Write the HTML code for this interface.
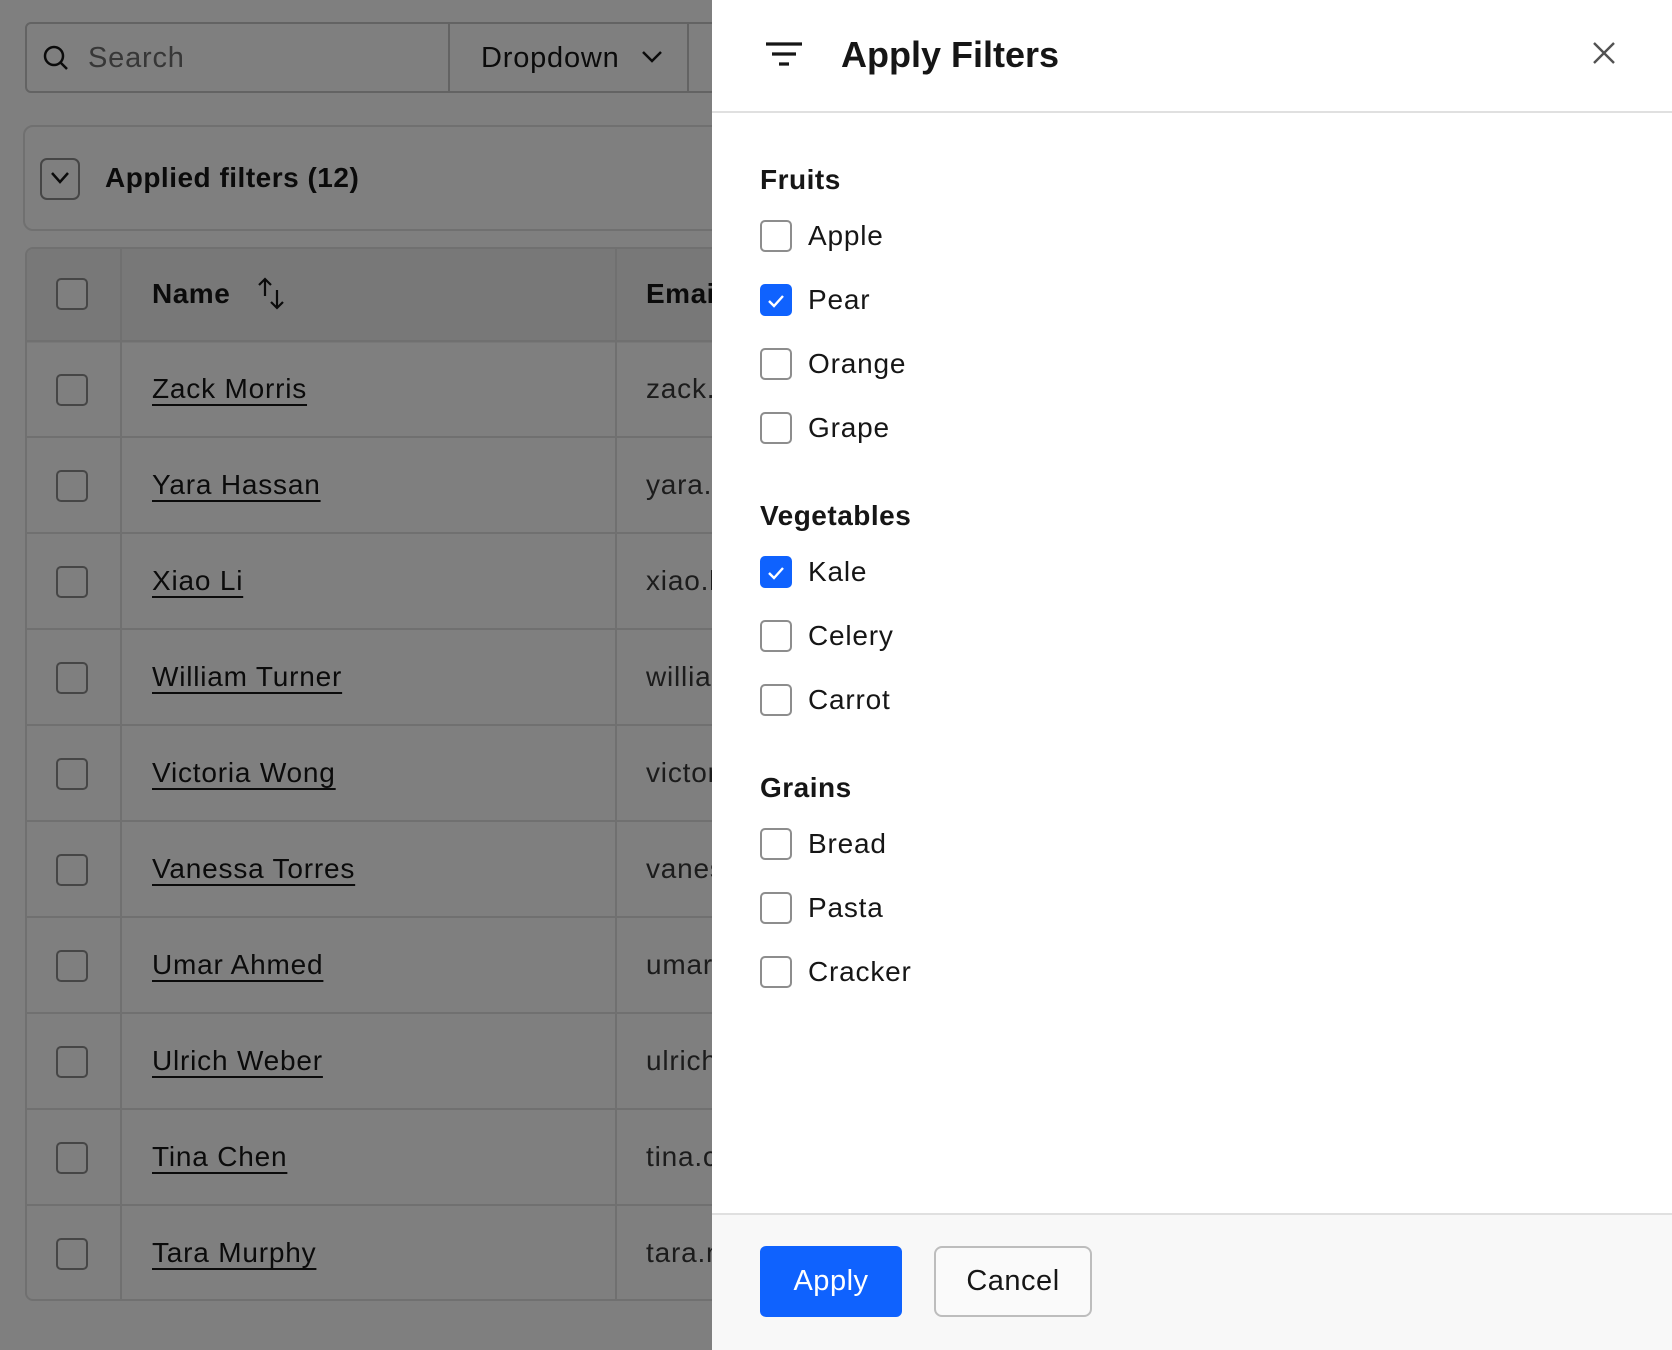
<!DOCTYPE html>
<html><head><meta charset="utf-8"><style>
*{box-sizing:border-box;margin:0;padding:0}
body{width:1672px;height:1350px;position:relative;overflow:hidden;background:#fff;font-family:"Liberation Sans",Arial,sans-serif;color:#161616;letter-spacing:0.5px}
.a{position:absolute}
.box{border:2px solid #c6c6c6;border-radius:6px}
.cb{position:absolute;width:32px;height:32px;border:2px solid #8d8d8d;border-radius:5px;background:#fff}
.ov{position:absolute;left:0;top:0;width:712px;height:1350px;background:rgba(0,0,0,.5)}
.nm{position:absolute;left:152px;font-size:28px;text-decoration:underline;text-decoration-thickness:2px;text-underline-offset:6px;color:#161616;letter-spacing:0.8px}
.em{position:absolute;left:646px;font-size:28px;color:#393939;letter-spacing:0.8px}
.lbl{position:absolute;left:808px;font-size:28px;color:#161616;letter-spacing:0.8px}
.hd{position:absolute;left:760px;font-size:28px;font-weight:bold}
.ck{position:absolute;left:760px;width:32px;height:32px;border:2px solid #8d8d8d;border-radius:5px;background:#fff}
.ck.on{background:#0f62fe;border-color:#0f62fe}
</style></head><body>
<div class="a" style="left:0;top:0;width:712px;height:1350px;background:#fff"></div>
<div class="a box" style="left:25px;top:22px;width:700px;height:71px"></div>
<div class="a" style="left:448px;top:22px;width:2px;height:71px;background:#c6c6c6"></div>
<div class="a" style="left:687px;top:22px;width:2px;height:71px;background:#c6c6c6"></div>
<svg class="a" style="left:42px;top:44px" width="28" height="28" viewBox="0 0 28 28"><circle cx="12" cy="12" r="9" fill="none" stroke="#161616" stroke-width="2.5"/><path d="M18.5 18.5 L25 25" stroke="#161616" stroke-width="2.5"/></svg>
<div class="a" style="left:88px;top:42px;font-size:29px;color:#6f6f6f;letter-spacing:0.8px">Search</div>
<div class="a" style="left:481px;top:42px;font-size:29px;color:#161616;letter-spacing:0.8px">Dropdown</div>
<svg class="a" style="left:640px;top:48px" width="24" height="18" viewBox="0 0 24 18"><path d="M3 4 L12 13 L21 4" fill="none" stroke="#161616" stroke-width="2.5"/></svg>
<div class="a" style="left:23px;top:125px;width:720px;height:106px;border:2px solid #e0e0e0;border-radius:10px;background:#fff"></div>
<div class="a" style="left:40px;top:158px;width:40px;height:42px;border:2px solid #8d8d8d;border-radius:7px"></div>
<svg class="a" style="left:48px;top:168px" width="24" height="20" viewBox="0 0 24 20"><path d="M4 5 L12 14 L20 5" fill="none" stroke="#161616" stroke-width="2.5"/></svg>
<div class="a" style="left:105px;top:162px;font-size:28px;font-weight:bold">Applied filters (12)</div>
<div class="a" style="left:25px;top:247px;width:720px;height:1054px;border:2px solid #e0e0e0;border-radius:8px;background:#fff;overflow:hidden">
<div class="a" style="left:0;top:0;width:720px;height:94px;background:#f0f0f0"></div>
</div>
<div class="a" style="left:120px;top:247px;width:2px;height:1054px;background:#e0e0e0"></div>
<div class="a" style="left:615px;top:247px;width:2px;height:1054px;background:#e0e0e0"></div>
<div class="cb" style="left:56px;top:278px"></div>
<div class="a" style="left:152px;top:278px;font-size:28px;font-weight:bold">Name</div>
<svg class="a" style="left:256px;top:276px" width="32" height="36" viewBox="0 0 32 36"><path d="M9 20 V3 M3 9 L9 3 L15 9 M21 14 V32 M15 26 L21 32 L27 26" fill="none" stroke="#161616" stroke-width="2.2"/></svg>
<div class="a" style="left:646px;top:278px;font-size:28px;font-weight:bold">Email</div>
<div class="a" style="left:25px;top:340px;width:720px;height:2px;background:#e0e0e0"></div>
<div class="a" style="left:25px;top:436px;width:720px;height:2px;background:#e0e0e0"></div>
<div class="a" style="left:25px;top:532px;width:720px;height:2px;background:#e0e0e0"></div>
<div class="a" style="left:25px;top:628px;width:720px;height:2px;background:#e0e0e0"></div>
<div class="a" style="left:25px;top:724px;width:720px;height:2px;background:#e0e0e0"></div>
<div class="a" style="left:25px;top:820px;width:720px;height:2px;background:#e0e0e0"></div>
<div class="a" style="left:25px;top:916px;width:720px;height:2px;background:#e0e0e0"></div>
<div class="a" style="left:25px;top:1012px;width:720px;height:2px;background:#e0e0e0"></div>
<div class="a" style="left:25px;top:1108px;width:720px;height:2px;background:#e0e0e0"></div>
<div class="a" style="left:25px;top:1204px;width:720px;height:2px;background:#e0e0e0"></div>
<div class="cb" style="left:56px;top:374px"></div><div class="nm" style="top:373px">Zack Morris</div><div class="em" style="top:373px">zack.morris</div>
<div class="cb" style="left:56px;top:470px"></div><div class="nm" style="top:469px">Yara Hassan</div><div class="em" style="top:469px">yara.hassan</div>
<div class="cb" style="left:56px;top:566px"></div><div class="nm" style="top:565px">Xiao Li</div><div class="em" style="top:565px">xiao.li</div>
<div class="cb" style="left:56px;top:662px"></div><div class="nm" style="top:661px">William Turner</div><div class="em" style="top:661px">william</div>
<div class="cb" style="left:56px;top:758px"></div><div class="nm" style="top:757px">Victoria Wong</div><div class="em" style="top:757px">victoria</div>
<div class="cb" style="left:56px;top:854px"></div><div class="nm" style="top:853px">Vanessa Torres</div><div class="em" style="top:853px">vanessa</div>
<div class="cb" style="left:56px;top:950px"></div><div class="nm" style="top:949px">Umar Ahmed</div><div class="em" style="top:949px">umar</div>
<div class="cb" style="left:56px;top:1046px"></div><div class="nm" style="top:1045px">Ulrich Weber</div><div class="em" style="top:1045px">ulrich</div>
<div class="cb" style="left:56px;top:1142px"></div><div class="nm" style="top:1141px">Tina Chen</div><div class="em" style="top:1141px">tina.chen</div>
<div class="cb" style="left:56px;top:1238px"></div><div class="nm" style="top:1237px">Tara Murphy</div><div class="em" style="top:1237px">tara.m</div>
<div class="ov"></div>
<div class="a" style="left:712px;top:0;width:960px;height:1350px;background:#fff;overflow:hidden">
<div class="a" style="left:0;top:111px;width:960px;height:2px;background:#e0e0e0"></div>
<div class="a" style="left:0;top:1213px;width:960px;height:137px;background:#f8f8f8;border-top:2px solid #e0e0e0"></div>
</div>
<svg class="a" style="left:764px;top:40px" width="40" height="30" viewBox="0 0 40 30"><path d="M2 4 H38 M8 14 H32 M15 24 H25" stroke="#161616" stroke-width="3.2"/></svg>
<div class="a" style="left:841px;top:34px;font-size:36px;font-weight:bold;color:#161616;letter-spacing:0">Apply Filters</div>
<svg class="a" style="left:1591px;top:40px" width="26" height="26" viewBox="0 0 26 26"><path d="M3 3 L23 23 M23 3 L3 23" stroke="#525252" stroke-width="2.4"/></svg>
<div class="hd" style="top:164px">Fruits</div>
<div class="ck" style="top:220px"></div><div class="lbl" style="top:220px">Apple</div>
<div class="ck on" style="top:284px"></div><div class="lbl" style="top:284px">Pear</div>
<div class="ck" style="top:348px"></div><div class="lbl" style="top:348px">Orange</div>
<div class="ck" style="top:412px"></div><div class="lbl" style="top:412px">Grape</div>
<div class="hd" style="top:500px">Vegetables</div>
<div class="ck on" style="top:556px"></div><div class="lbl" style="top:556px">Kale</div>
<div class="ck" style="top:620px"></div><div class="lbl" style="top:620px">Celery</div>
<div class="ck" style="top:684px"></div><div class="lbl" style="top:684px">Carrot</div>
<div class="hd" style="top:772px">Grains</div>
<div class="ck" style="top:828px"></div><div class="lbl" style="top:828px">Bread</div>
<div class="ck" style="top:892px"></div><div class="lbl" style="top:892px">Pasta</div>
<div class="ck" style="top:956px"></div><div class="lbl" style="top:956px">Cracker</div>
<svg class="a" style="left:764px;top:292px" width="24" height="18" viewBox="0 0 24 18"><path d="M5 9 L10 14 L19 4" fill="none" stroke="#fff" stroke-width="2.4"/></svg>
<svg class="a" style="left:764px;top:564px" width="24" height="18" viewBox="0 0 24 18"><path d="M5 9 L10 14 L19 4" fill="none" stroke="#fff" stroke-width="2.4"/></svg>
<div class="a" style="left:760px;top:1246px;width:142px;height:71px;background:#0f62fe;border-radius:6px;color:#fff;font-size:29px;text-align:center;line-height:71px">Apply</div>
<div class="a" style="left:934px;top:1246px;width:158px;height:71px;border:2px solid #bdbdbd;border-radius:8px;background:#fafafa;color:#161616;font-size:29px;text-align:center;line-height:67px">Cancel</div>
</body></html>
